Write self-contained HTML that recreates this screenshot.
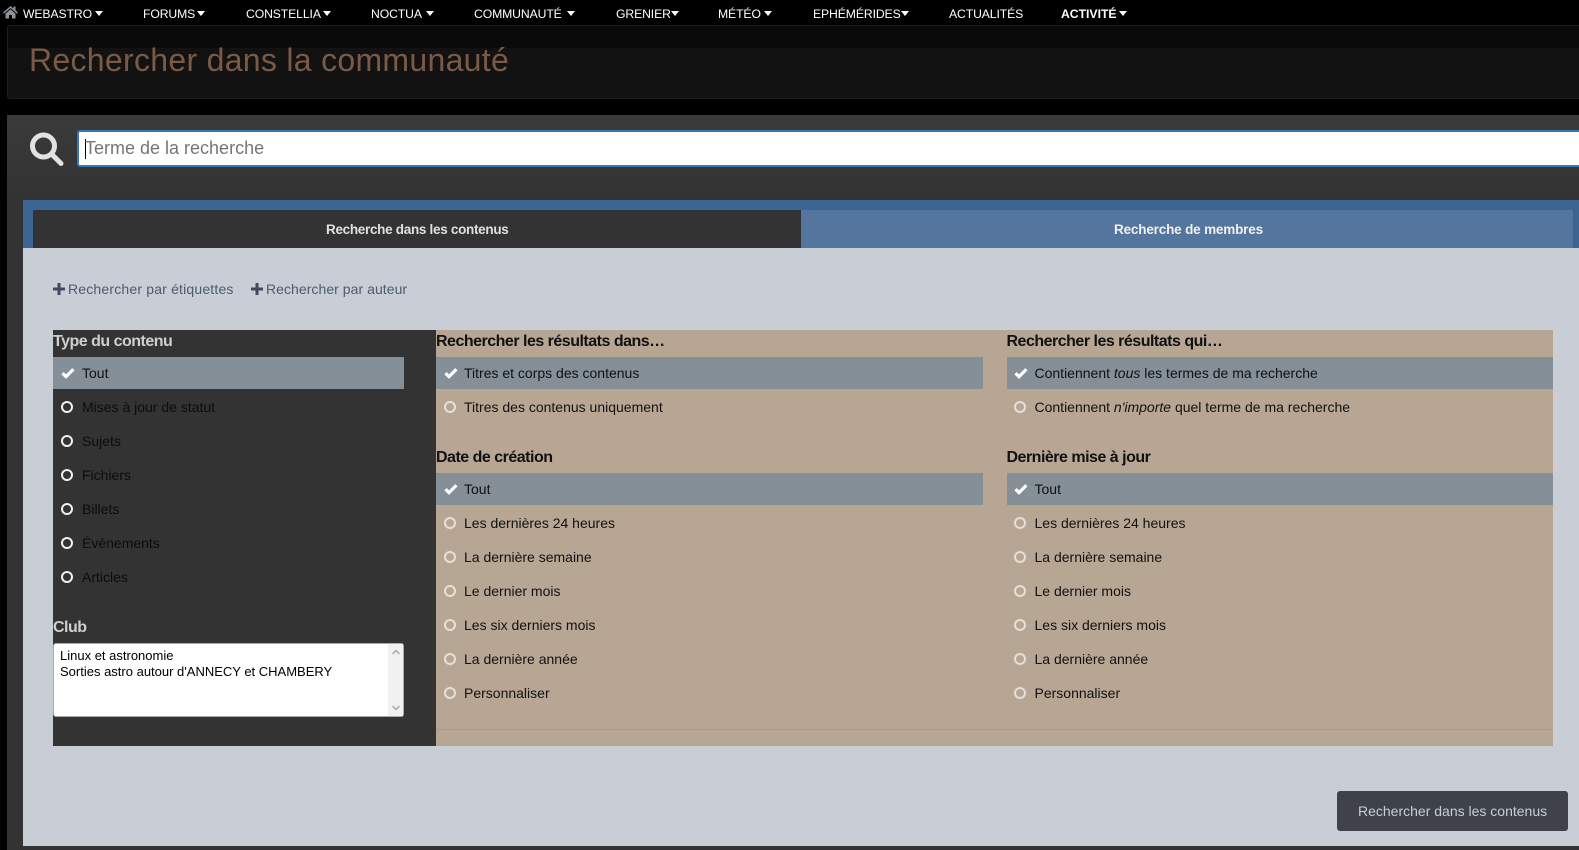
<!DOCTYPE html>
<html lang="fr"><head><meta charset="utf-8"><title>Rechercher dans la communauté</title>
<style>
html,body{margin:0;padding:0;width:1579px;height:850px;overflow:hidden;background:#000;font-family:"Liberation Sans",sans-serif}
div,span.a{position:absolute}
.b{position:absolute}
.t{position:absolute;line-height:20px;white-space:nowrap}
.n{color:#fff;font-size:12.2px;top:3.5px;letter-spacing:-.1px}
.c{position:absolute;top:11px;width:0;height:0;border-left:4.5px solid transparent;border-right:4.5px solid transparent;border-top:5px solid #fff}
.h{font-size:16px;font-weight:bold;color:#111;letter-spacing:-.5px}
.r{font-size:14px;color:#111}
.d{color:#0c0c0c}
.o{position:absolute;width:8px;height:8px;border:2.5px solid #e4e0da;border-radius:50%}
.w{border-color:#eef0f2}
.k{position:absolute;width:14px;height:12px}
em{font-style:italic}
</style></head><body>
<svg width="0" height="0" style="position:absolute"><defs><symbol id="ck" viewBox="0 0 14 12"><path d="M1.5 6.2 L5 9.600 L12.400 2.200" fill="none" stroke="#fff" stroke-width="3.200"/></symbol></defs></svg>

<!-- top nav -->
<svg class="b" style="left:2px;top:5px" width="17" height="14" viewBox="0 0 17 14"><path d="M8.5 1 L1 7.500 L2 8.600 L8.500 3 L15 8.600 L16 7.500 L13.500 5.300 V1.500 H11.500 V3.500 Z M3.500 8.600 V13.500 H7 V10 H10 V13.500 H13.500 V8.600 L8.500 4.300 Z" fill="#8d9398"/></svg>
<span class="t n" style="left:23px">WEBASTRO</span><i class="c" style="left:95px"></i>
<span class="t n" style="left:143px">FORUMS</span><i class="c" style="left:197px"></i>
<span class="t n" style="left:246px">CONSTELLIA</span><i class="c" style="left:323px"></i>
<span class="t n" style="left:371px">NOCTUA</span><i class="c" style="left:426px"></i>
<span class="t n" style="left:474px">COMMUNAUTÉ</span><i class="c" style="left:567px"></i>
<span class="t n" style="left:616px">GRENIER</span><i class="c" style="left:671px"></i>
<span class="t n" style="left:718px">MÉTÉO</span><i class="c" style="left:764px"></i>
<span class="t n" style="left:813px">EPHÉMÉRIDES</span><i class="c" style="left:901px"></i>
<span class="t n" style="left:949px">ACTUALITÉS</span>
<span class="t n" style="left:1061px;font-weight:bold;letter-spacing:0">ACTIVITÉ</span><i class="c" style="left:1119px"></i>

<!-- header -->
<div style="left:7px;top:25px;width:1572px;height:74px;background:#121212;border:1px solid #1f1f1f;border-right:0;box-sizing:border-box;border-radius:3px 0 0 3px"></div>
<div style="left:8px;top:26px;width:1571px;height:22px;background:#0a0a0a"></div>
<span class="t" style="left:29px;top:49px;line-height:22px;font-size:32px;color:#7a5a46;letter-spacing:.3px">Rechercher dans la communauté</span>

<!-- dark panel -->
<div style="left:7px;top:115px;width:1572px;height:735px;background:#333"></div>
<div style="left:7px;top:115px;width:1572px;height:85px;background:linear-gradient(#3a3a3a,#333)"></div>
<svg class="b" style="left:27px;top:130px" width="38" height="38" viewBox="0 0 38 38"><circle cx="16.500" cy="16" r="11" fill="none" stroke="#e2e2e2" stroke-width="5"/><path d="M25 24.500 L34 33.500" stroke="#e2e2e2" stroke-width="5" stroke-linecap="round"/></svg>
<div style="left:77px;top:130px;width:1510px;height:37px;box-sizing:border-box;background:#fff;border:2px solid #3579b5;border-radius:3px"></div>
<div style="left:85px;top:139px;width:1px;height:20px;background:#000"></div>
<span class="t" style="left:85px;top:138px;font-size:18px;color:#757575">Terme de la recherche</span>

<!-- main box -->
<div style="left:23px;top:200px;width:1556px;height:646px;background:#c9cdd6"></div>
<div style="left:23px;top:200px;width:1556px;height:48px;background:#3d6594"></div>
<div style="left:33px;top:210px;width:768px;height:38px;background:#333"></div>
<div style="left:801px;top:210px;width:772px;height:38px;background:#54759e"></div>
<span class="t" style="left:326px;top:220px;font-size:13.500px;font-weight:bold;color:#e0e0e0;letter-spacing:-.3px">Recherche dans les contenus</span>
<span class="t" style="left:1114px;top:220px;font-size:13.500px;font-weight:bold;color:#f0f0f0;letter-spacing:-.17px">Recherche de membres</span>

<svg class="b" style="left:53px;top:283px" width="12" height="12" viewBox="0 0 12 12"><path d="M0 6H12M6 0V12" stroke="#3f4a60" stroke-width="3"/></svg>
<span class="t" style="left:68px;top:279px;font-size:14px;color:#4d5a70;letter-spacing:.18px">Rechercher par étiquettes</span>
<svg class="b" style="left:251px;top:283px" width="12" height="12" viewBox="0 0 12 12"><path d="M0 6H12M6 0V12" stroke="#3f4a60" stroke-width="3"/></svg>
<span class="t" style="left:266px;top:279px;font-size:14px;color:#4d5a70;letter-spacing:.05px">Rechercher par auteur</span>

<!-- columns -->
<div style="left:53px;top:330px;width:383px;height:416px;background:#333"></div>
<div style="left:436px;top:330px;width:1117px;height:416px;background:#b8a695"></div>
<div style="left:436px;top:729px;width:1117px;height:1px;background:#ac9b8a"></div>

<!-- col 1 -->
<span class="t h" style="left:53px;top:332px;color:#cfcfcf">Type du contenu</span>
<div style="left:53px;top:357px;width:351px;height:32px;background:#858f98"></div>
<svg class="k" style="left:61px;top:367px"><use href="#ck"/></svg><span class="t r" style="left:82px;top:363px">Tout</span>
<i class="o w" style="left:61px;top:401px"></i><span class="t r d" style="left:82px;top:397px">Mises à jour de statut</span>
<i class="o w" style="left:61px;top:435px"></i><span class="t r d" style="left:82px;top:431px">Sujets</span>
<i class="o w" style="left:61px;top:469px"></i><span class="t r d" style="left:82px;top:465px">Fichiers</span>
<i class="o w" style="left:61px;top:503px"></i><span class="t r d" style="left:82px;top:499px">Billets</span>
<i class="o w" style="left:61px;top:537px"></i><span class="t r d" style="left:82px;top:533px">Évènements</span>
<i class="o w" style="left:61px;top:571px"></i><span class="t r d" style="left:82px;top:567px">Articles</span>
<span class="t h" style="left:53px;top:618px;color:#cfcfcf">Club</span>
<div style="left:53px;top:643px;width:351px;height:74px;box-sizing:border-box;background:#fff;border:1px solid #aaa;border-radius:3px"></div>
<div style="left:388px;top:644px;width:15px;height:72px;background:#f1f1f1"></div>
<svg class="b" style="left:391px;top:648px" width="10" height="64" viewBox="0 0 10 64"><path d="M1.500 6L5 2.500L8.500 6M1.500 58L5 61.500L8.500 58" fill="none" stroke="#b4b4b4" stroke-width="1.800"/></svg>
<span class="t" style="left:60px;top:646px;font-size:13px;color:#000;line-height:20px">Linux et astronomie</span>
<span class="t" style="left:60px;top:662px;font-size:13px;color:#000;line-height:20px">Sorties astro autour d'ANNECY et CHAMBERY</span>

<!-- col 2 -->
<span class="t h" style="left:436px;top:332px">Rechercher les résultats dans…</span>
<div style="left:436px;top:357px;width:547px;height:32px;background:#858f98"></div>
<svg class="k" style="left:444px;top:367px"><use href="#ck"/></svg><span class="t r" style="left:464px;top:363px">Titres et corps des contenus</span>
<i class="o" style="left:444px;top:401px"></i><span class="t r" style="left:464px;top:397px">Titres des contenus uniquement</span>
<span class="t h" style="left:436px;top:448px">Date de création</span>
<div style="left:436px;top:473px;width:547px;height:32px;background:#858f98"></div>
<svg class="k" style="left:444px;top:483px"><use href="#ck"/></svg><span class="t r" style="left:464px;top:479px">Tout</span>
<i class="o" style="left:444px;top:517px"></i><span class="t r" style="left:464px;top:513px">Les dernières 24 heures</span>
<i class="o" style="left:444px;top:551px"></i><span class="t r" style="left:464px;top:547px">La dernière semaine</span>
<i class="o" style="left:444px;top:585px"></i><span class="t r" style="left:464px;top:581px">Le dernier mois</span>
<i class="o" style="left:444px;top:619px"></i><span class="t r" style="left:464px;top:615px">Les six derniers mois</span>
<i class="o" style="left:444px;top:653px"></i><span class="t r" style="left:464px;top:649px">La dernière année</span>
<i class="o" style="left:444px;top:687px"></i><span class="t r" style="left:464px;top:683px">Personnaliser</span>

<!-- col 3 -->
<span class="t h" style="left:1006.500px;top:332px">Rechercher les résultats qui…</span>
<div style="left:1007px;top:357px;width:546px;height:32px;background:#858f98"></div>
<svg class="k" style="left:1014px;top:367px"><use href="#ck"/></svg><span class="t r" style="left:1034.500px;top:363px">Contiennent <em>tous</em> les termes de ma recherche</span>
<i class="o" style="left:1014px;top:401px"></i><span class="t r" style="left:1034.500px;top:397px">Contiennent <em>n'importe</em> quel terme de ma recherche</span>
<span class="t h" style="left:1006.500px;top:448px">Dernière mise à jour</span>
<div style="left:1007px;top:473px;width:546px;height:32px;background:#858f98"></div>
<svg class="k" style="left:1014px;top:483px"><use href="#ck"/></svg><span class="t r" style="left:1034.500px;top:479px">Tout</span>
<i class="o" style="left:1014px;top:517px"></i><span class="t r" style="left:1034.500px;top:513px">Les dernières 24 heures</span>
<i class="o" style="left:1014px;top:551px"></i><span class="t r" style="left:1034.500px;top:547px">La dernière semaine</span>
<i class="o" style="left:1014px;top:585px"></i><span class="t r" style="left:1034.500px;top:581px">Le dernier mois</span>
<i class="o" style="left:1014px;top:619px"></i><span class="t r" style="left:1034.500px;top:615px">Les six derniers mois</span>
<i class="o" style="left:1014px;top:653px"></i><span class="t r" style="left:1034.500px;top:649px">La dernière année</span>
<i class="o" style="left:1014px;top:687px"></i><span class="t r" style="left:1034.500px;top:683px">Personnaliser</span>

<!-- button -->
<div style="left:1337px;top:791px;width:231px;height:40px;background:#3f424b;border-radius:3px"></div>
<span class="t" style="left:1358px;top:801px;font-size:14px;color:#c6ced6">Rechercher dans les contenus</span>
</body></html>
